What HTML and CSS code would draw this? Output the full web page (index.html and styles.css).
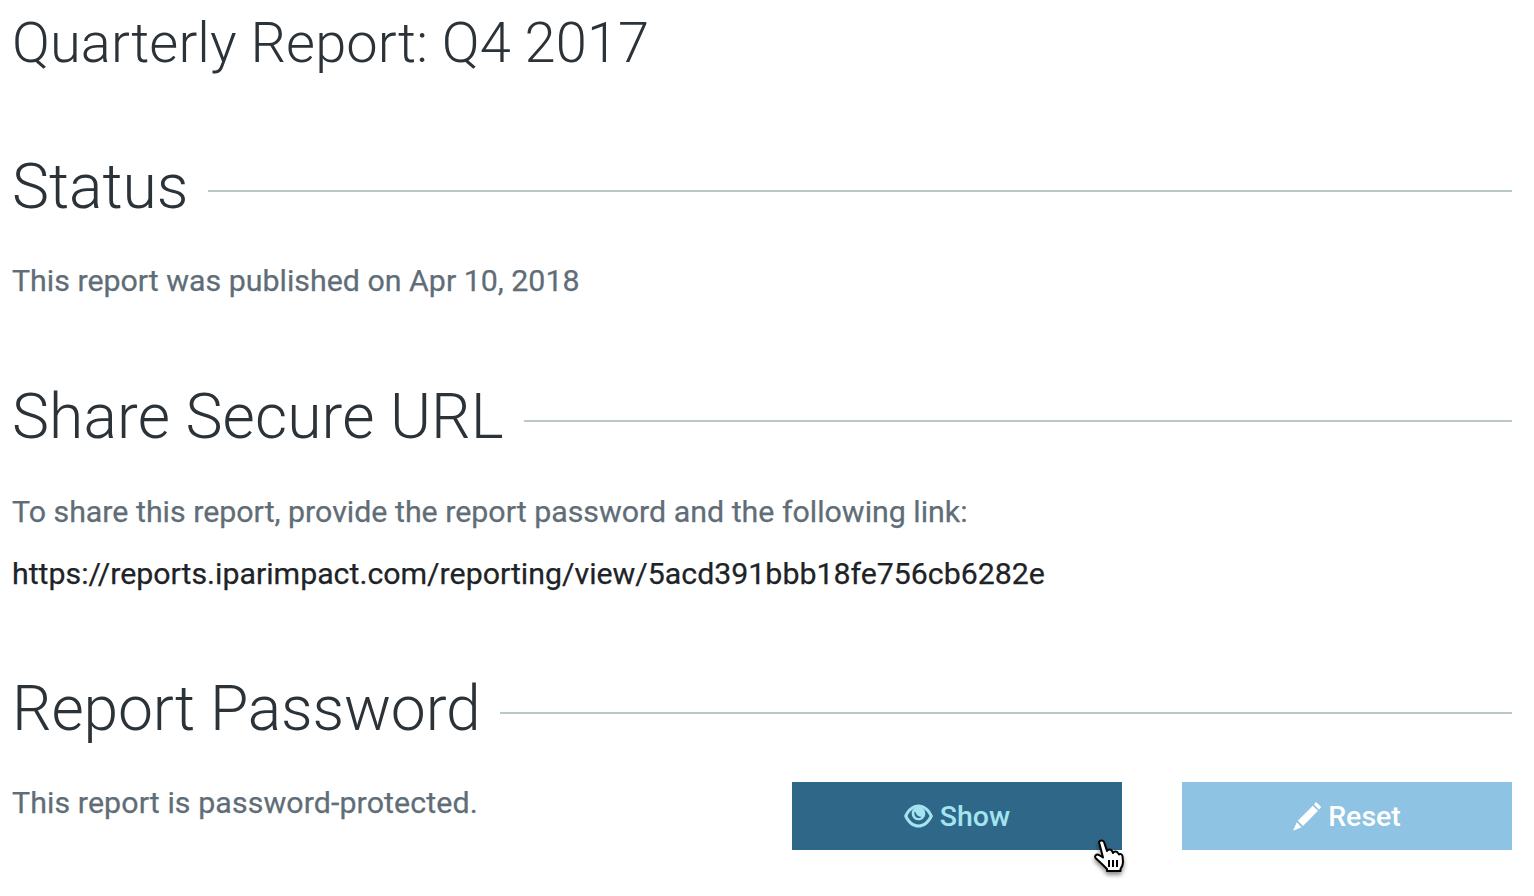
FILE: index.html
```html
<!DOCTYPE html>
<html lang="en">
<head>
    <meta charset="UTF-8">
    <meta name="viewport" content="width=device-width, initial-scale=1.0">
    <title>Quarterly Report: Q4 2017</title>
    <link rel="stylesheet" href="styles.css">
</head>
<body>
    <h1 class="title">Quarterly Report: Q4 2017</h1>

    <div class="section section-status">
        <h2 class="section-head"><span>Status</span></h2>
        <p class="note">This report was published on Apr 10, 2018</p>
    </div>

    <div class="section section-share">
        <h2 class="section-head"><span>Share Secure URL</span></h2>
        <p class="note">To share this report, provide the report password and the following link:</p>
        <p class="link">https://reports.iparimpact.com/reporting/view/5acd391bbb18fe756cb6282e</p>
    </div>

    <div class="section section-password">
        <h2 class="section-head"><span>Report Password</span></h2>
        <div class="password-row">
            <p class="note">This report is password-protected.</p>
            <div class="actions">
                <button class="btn btn-show">
                    <svg class="btn-icon icon-eye" viewBox="0 0 30 24" aria-hidden="true">
                        <path fill-rule="evenodd" d="M15 0C9 0 3.500 4 0 12C3.500 20 9 24 15 24C21 24 26.500 20 30 12C26.500 4 21 0 15 0ZM15 3.300C19.500 3.300 23.800 6.500 26.400 12C23.800 17.500 19.500 20.700 15 20.700C10.500 20.700 6.200 17.500 3.600 12C6.200 6.500 10.500 3.300 15 3.300Z"/>
                        <path fill-rule="evenodd" d="M15 2.500C19 2.500 22 5.500 22 9.500C22 13.500 19 16.500 15 16.500C11 16.500 8 13.500 8 9.500C8 5.500 11 2.500 15 2.500ZM10.800 7.800C10.300 10.500 11.500 13.300 14.300 14C16 14.400 17.500 13.800 18 12.800C15 13 12.800 11 11.800 7.800C11.500 7.400 11 7.400 10.800 7.800Z"/>
                    </svg>
                    Show
                </button>
                <button class="btn btn-reset">
                    <svg class="btn-icon icon-pencil" viewBox="0 0 28 29" aria-hidden="true">
                        <path d="M23.500 0.500L27.500 4.300C28 4.800 28 5.500 27.500 6L26 7.500L21 2.500L22.500 0.500C22.800 0.200 23.200 0.200 23.500 0.500ZM19.800 3.700L25 8.800L10 24L4.800 18.800ZM3.800 20.300L8.500 25.200L0 28.700Z"/>
                    </svg>
                    Reset
                </button>
                <svg class="cursor" viewBox="0 0 32 36" aria-hidden="true">
                    <path fill="#fff" stroke="#000" stroke-width="2" stroke-linejoin="round" d="M6 3C7 1 10 1 11 3L14 12C15 10 18 10 19 12L20 14C21 12 24 12 25 14L26 15.500C27 14.500 29 15 29.500 17L30 23C30 26 29 28 27.500 30L27.500 32L14 32L14 30C11 27 7 23 3 19.500C1 17.500 3 14.500 6 16L10 18.500Z"/>
                    <path fill="none" stroke="#000" stroke-width="2" d="M16 21L16 28M20 21L20 28M24 21L24 28"/>
                </svg>
            </div>
        </div>
    </div>
</body>
</html>
```

FILE: styles.css
```css
* {
    margin: 0;
    padding: 0;
    box-sizing: border-box;
}
body {
    font-family: Roboto, 'Liberation Sans', sans-serif;
    background: #fff;
    color: #2b3238;
    min-height: 100vh;
    padding: 9px 22px 0 12px;
}
.title {
    font-size: 56px;
    font-weight: 300;
    line-height: 68px;
    letter-spacing: 0.08px;
}
.section-head {
    display: flex;
    align-items: center;
    gap: 20px;
    font-size: 62.4px;
    font-weight: 300;
    line-height: 76px;
}
.section-head::after {
    content: "";
    flex: 1;
    height: 2px;
    margin-top: 8px;
    background: #b9c9c8;
}
.section-status {
    margin-top: 72px;
}
.section-status .note {
    margin-top: 36px;
}
.section-share {
    margin-top: 78px;
}
.section-share .section-head {
    letter-spacing: 0.13px;
}
.section-password {
    margin-top: 77px;
}
.section-password .section-head {
    letter-spacing: -0.19px;
}
.section-password .note {
    margin-top: 36px;
    letter-spacing: 0.09px;
}
.note {
    font-size: 30.35px;
    line-height: 40px;
    color: #606d77;
    margin-top: 37px;
    -webkit-text-stroke: 0.25px #606d77;
}
.link {
    font-size: 30.3px;
    line-height: 40px;
    color: #1d2327;
    margin-top: 22px;
    -webkit-text-stroke: 0.25px #1d2327;
}
.password-row {
    display: flex;
    justify-content: space-between;
    align-items: flex-start;
}
.actions {
    position: relative;
    display: flex;
    gap: 60px;
    margin-top: 35px;
}
.btn {
    display: flex;
    align-items: center;
    justify-content: center;
    gap: 7px;
    width: 330px;
    height: 68px;
    border: none;
    font-family: inherit;
    font-size: 28.5px;
    font-weight: 500;
}
.btn-show {
    background: #2f6789;
    color: #a3e4f0;
}
.btn-reset {
    background: #8fc3e3;
    color: #fff;
}
.btn-icon {
    fill: currentColor;
}
.icon-eye {
    width: 29px;
    height: 24px;
}
.icon-pencil {
    width: 28px;
    height: 29px;
}
.cursor {
    position: absolute;
    left: 301px;
    top: 57px;
    width: 32px;
    height: 36px;
    filter: drop-shadow(0 3px 2px rgba(0, 0, 0, 0.45));
}
```
